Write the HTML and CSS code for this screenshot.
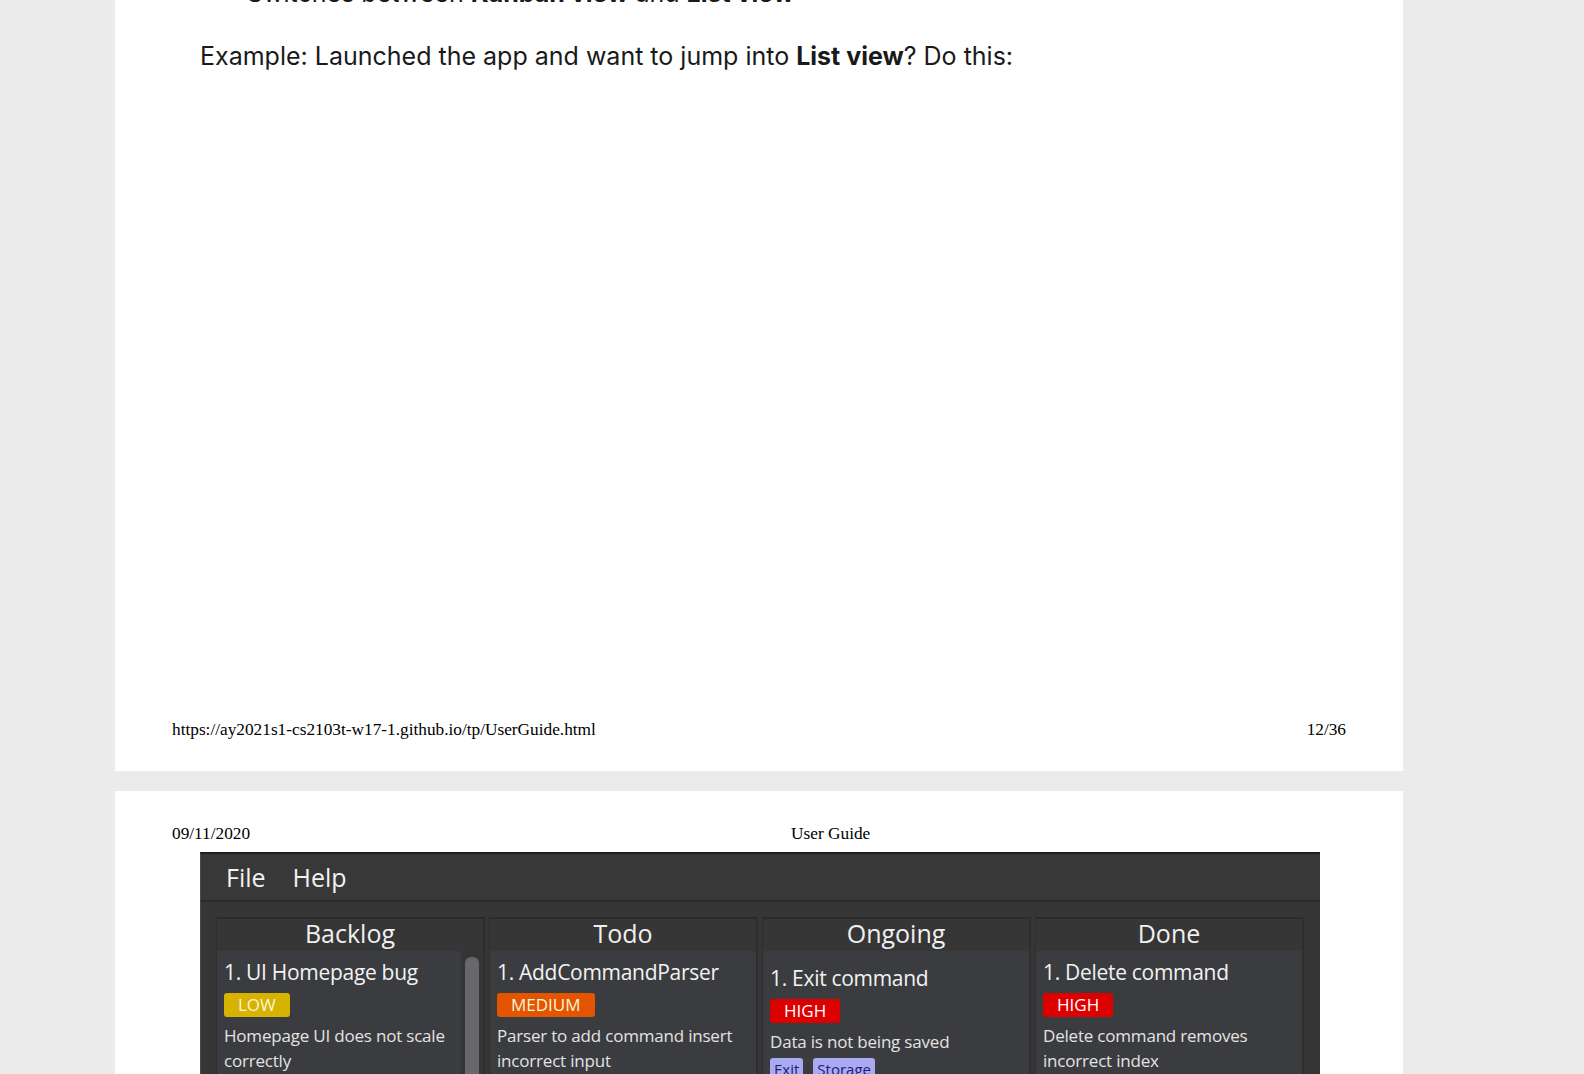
FILE: index.html
```html
<!DOCTYPE html>
<html>
<head>
<meta charset="utf-8">
<link rel="stylesheet" href="styles.css">
</head>
<body>
<div class="page page-one">
  <ul class="bullets">
    <li>Switches between <b>Kanban view</b> and <b>List view</b></li>
  </ul>
  <p class="example">Example: Launched the app and want to jump into <b>List view</b>? Do this:</p>
  <div class="blank"></div>
  <div class="footer">
    <span>https://ay2021s1-cs2103t-w17-1.github.io/tp/UserGuide.html</span>
    <span>12/36</span>
  </div>
</div>
<div class="page page-two">
  <div class="header">
    <span class="date">09/11/2020</span>
    <span class="title">User Guide</span>
  </div>
  <div class="app">
    <div class="menubar"><span>File</span><span>Help</span></div>
    <div class="board">
      <div class="col">
        <div class="col-head">Backlog</div>
        <div class="col-body">
          <div class="card">
            <div class="card-title">1. UI Homepage bug</div>
            <span class="badge low">LOW</span>
            <div class="desc">Homepage UI does not scale correctly</div>
          </div>
          <div class="track"><div class="thumb"></div></div>
        </div>
      </div>
      <div class="col">
        <div class="col-head">Todo</div>
        <div class="col-body">
          <div class="card">
            <div class="card-title">1. AddCommandParser</div>
            <span class="badge medium">MEDIUM</span>
            <div class="desc">Parser to add command insert incorrect input</div>
          </div>
        </div>
      </div>
      <div class="col">
        <div class="col-head">Ongoing</div>
        <div class="col-body">
          <div class="card card-low">
            <div class="card-title">1. Exit command</div>
            <span class="badge high">HIGH</span>
            <div class="desc">Data is not being saved</div>
            <div class="tags"><span class="tag">Exit</span><span class="tag">Storage</span></div>
          </div>
        </div>
      </div>
      <div class="col">
        <div class="col-head">Done</div>
        <div class="col-body">
          <div class="card">
            <div class="card-title">1. Delete command</div>
            <span class="badge high">HIGH</span>
            <div class="desc">Delete command removes incorrect index</div>
          </div>
        </div>
      </div>
    </div>
  </div>
</div>
</body>
</html>
```
FILE: styles.css
```css
html, body {
  margin: 0;
  padding: 0;
}
body {
  background: #ebebeb;
  overflow: hidden;
  height: 1074px;
}
.page {
  width: 1288px;
  margin-left: 115px;
  background: #ffffff;
  box-sizing: border-box;
}
.page-one {
  margin-top: -24px;
  height: 795px;
  display: flex;
  flex-direction: column;
  padding-top: 1px;
}
.bullets {
  margin: 0;
  padding: 0 0 0 132px;
  font-family: Inter, "Liberation Sans", sans-serif;
  font-size: 25px;
  line-height: 32px;
  color: #1a1a1a;
  list-style: none;
}
.bullets li {
  margin: 0;
}
.example {
  margin: 31px 0 0 85px;
  font-family: Inter, "Liberation Sans", sans-serif;
  font-size: 25px;
  line-height: 32px;
  color: #1a1a1a;
  letter-spacing: 0;
}
.example b {
  font-weight: 700;
}
.blank {
  flex: 1;
}
.footer {
  display: flex;
  justify-content: space-between;
  padding: 0 57px 31px 57px;
  font-family: "Liberation Serif", serif;
  font-size: 17.3px;
  line-height: 20px;
  color: #000;
}
.page-two {
  margin-top: 20px;
  height: 400px;
  padding-top: 33px;
}
.header {
  display: flex;
  padding-left: 57px;
  font-family: "Liberation Serif", serif;
  font-size: 17.3px;
  line-height: 20px;
  color: #000;
}
.header .title {
  margin-left: 541px;
}
.app {
  margin: 8px 0 0 85px;
  width: 1120px;
  height: 260px;
  background: #363636;
  border-top: 2px solid #1f1f1f;
  border-left: 1px solid #4a4a4a;
  box-sizing: border-box;
  font-family: "Open Sans", "Liberation Sans", sans-serif;
  color: #f2f2f2;
}
.menubar {
  height: 45px;
  background: #383838;
  border-bottom: 2px solid #2b2b2b;
  display: flex;
  align-items: center;
  gap: 27px;
  padding-left: 25px;
  font-size: 25px;
  padding-bottom: 1px;
}
.board {
  display: flex;
  gap: 4px;
  padding: 15px 0 0 15px;
}
.col {
  width: 269px;
  box-sizing: border-box;
  border-top: 2px solid #2b2b2b;
  border-right: 2px solid #2e2e2e;
  border-left: 1px solid #2e2e2e;
  background: #363636;
}
.col-head {
  height: 32px;
  text-align: center;
  font-size: 25px;
  line-height: 28px;
  padding-bottom: 4px;
  box-sizing: border-box;
  color: #f0f0f0;
}
.col-body {
  display: flex;
  background: #3b3c3f;
  height: 200px;
}
.card {
  flex: 1;
  padding: 7px 6px 0 7px;
}
.card-low {
  padding-top: 13px;
}
.card-title {
  font-size: 21px;
  line-height: 28px;
  color: #f2f2f2;
  letter-spacing: -0.3px;
}
.badge {
  display: inline-block;
  margin-top: 7px;
  padding: 0 14px;
  height: 24px;
  line-height: 24px;
  font-size: 17px;
  border-radius: 3px;
  color: #fff3d8;
}
.low { background: #d6b300; }
.medium { background: #e35500; }
.high { background: #dd0000; color: #fff; }
.desc {
  margin-top: 6px;
  font-size: 17px;
  line-height: 25px;
  color: #e3e3e3;
  letter-spacing: -0.2px;
}
.tags {
  display: flex;
  gap: 10px;
  margin-top: 4px;
}
.tag {
  background: #a9aaf2;
  color: #20207a;
  font-size: 15px;
  line-height: 22px;
  padding: 0 4px;
  border-radius: 3px;
}
.track {
  width: 22px;
  background: #353536;
  display: flex;
  justify-content: center;
  padding-top: 6px;
}
.thumb {
  width: 14px;
  height: 200px;
  background: #68686a;
  border-radius: 6px;
}
```
